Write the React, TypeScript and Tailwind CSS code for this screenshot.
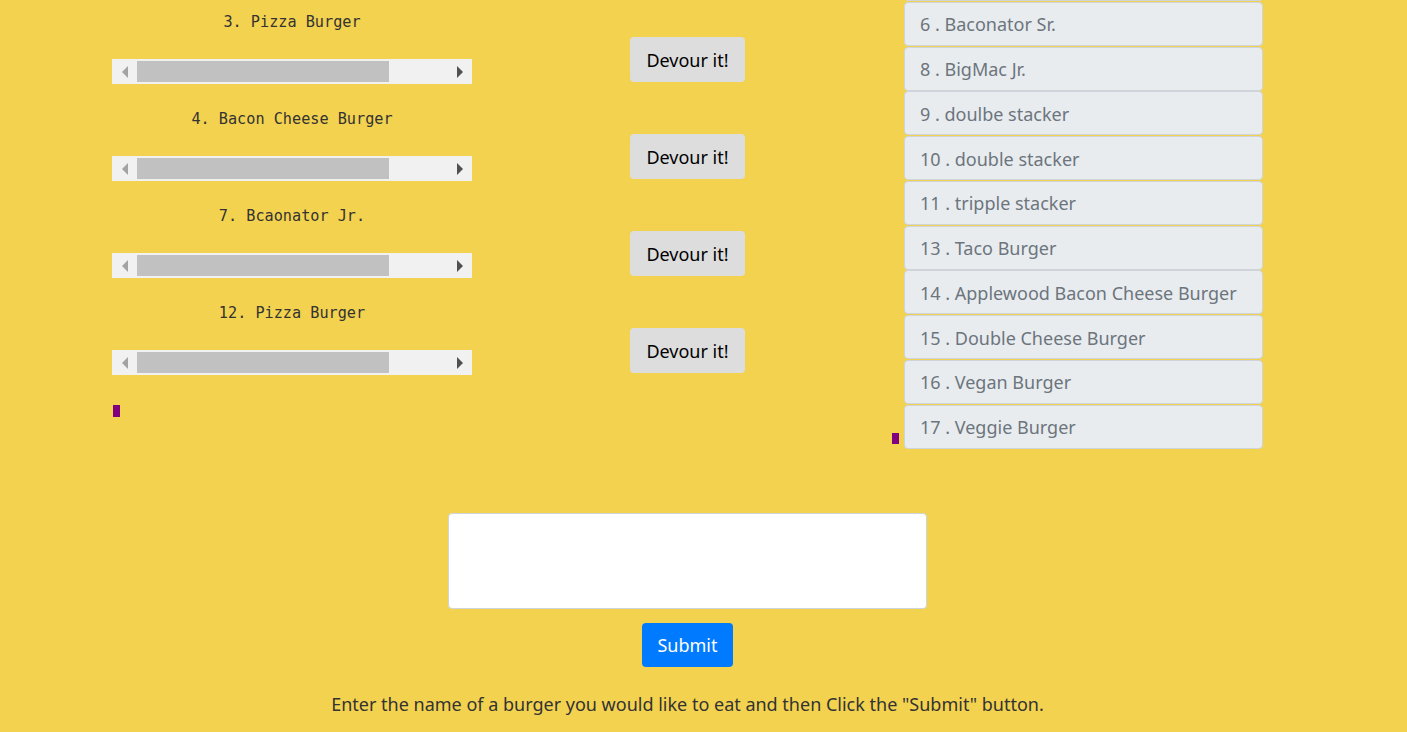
import * as React from "react";

const EATEN = ["3. Pizza Burger", "4. Bacon Cheese Burger", "7. Bcaonator Jr.", "12. Pizza Burger"];

const WAITING = [
  "6 . Baconator Sr.",
  "8 . BigMac Jr.",
  "9 . doulbe stacker",
  "10 . double stacker",
  "11 . tripple stacker",
  "13 . Taco Burger",
  "14 . Applewood Bacon Cheese Burger",
  "15 . Double Cheese Burger",
  "16 . Vegan Burger",
  "17 . Veggie Burger",
];

// fake horizontal scrollbar like the browser one under each name
function ScrollTrack() {
  return (
    <div className="flex h-[25px] w-[360px] items-center bg-[#f1f1f1]">
      <div className="flex w-[25px] justify-center">
        <svg width="6" height="12" viewBox="0 0 6 12">
          <polygon points="6,0 6,12 0,6" fill="#a3a3a3" />
        </svg>
      </div>
      <div className="h-[21px] w-[252px] bg-[#c1c1c1]" />
      <div className="flex flex-1 justify-end pr-[9px]">
        <svg width="6" height="12" viewBox="0 0 6 12">
          <polygon points="0,0 0,12 6,6" fill="#505050" />
        </svg>
      </div>
    </div>
  );
}

function EatenRow({ name }: { name: string }) {
  return (
    <div className="flex h-[97px] items-start">
      <div className="w-[360px]">
        <p
          className="h-[20px] pt-[1px] text-center text-[15.2px] leading-[20px] text-[#333]"
          style={{ fontFamily: "'DejaVu Sans Mono', 'Liberation Mono', monospace" }}
        >
          {name}
        </p>
        <div className="mt-[28px]">
          <ScrollTrack />
        </div>
      </div>
      <button className="ml-[158px] mt-[26px] h-[45px] w-[115px] rounded-[4px] bg-[#dddddd] pt-[2px] text-[18px] text-black">
        Devour it!
      </button>
    </div>
  );
}

export default function App() {
  return (
    <div className="min-h-screen w-full overflow-hidden bg-[#f3d24f]" style={{ fontFamily: "'Noto Sans', 'Open Sans', sans-serif" }}>
      <div className="flex items-start">
        {/* Eaten burgers + devour buttons */}
        <div className="ml-[112px] pt-[11px]">
          {EATEN.map((b, i) => (
            <EatenRow key={i} name={b} />
          ))}
          <div className="ml-[1px] mt-[6px] h-[12px] w-[7px] bg-[#800080]" />
        </div>

        {/* Burger list */}
        <div className="ml-[147px] flex items-end">
          <div className="mb-[5px] h-[11px] w-[7px] bg-[#800080]" />
          <ul className="-mt-[43px] ml-[5px] w-[359px]">
            {/* item scrolled above the top edge */}
            <li className="mb-[0.75px] h-[44px] rounded-[4px] border border-[#ced4da] bg-[#e9ecef]" />
            {WAITING.map((b) => (
              <li
                key={b}
                className="mb-[0.75px] flex h-[44px] items-center rounded-[4px] border border-[#ced4da] bg-[#e9ecef] pl-[15px] pt-[2px] text-[18px] text-[#6c757d]"
              >
                {b}
              </li>
            ))}
          </ul>
        </div>
      </div>

      {/* Add burger form */}
      <div className="mt-[64px] flex w-[1375px] flex-col items-center">
        <textarea className="h-[96px] w-[479px] resize-none rounded-[4px] border border-[#ced4da] bg-white" />
        <button className="mt-[14px] h-[44px] w-[91px] rounded-[4px] bg-[#007bff] pt-[1px] text-[18px] text-white">Submit</button>
        <p className="mt-[24px] text-[18px] text-[#333]">
          Enter the name of a burger you would like to eat and then Click the "Submit" button.
        </p>
      </div>
    </div>
  );
}
